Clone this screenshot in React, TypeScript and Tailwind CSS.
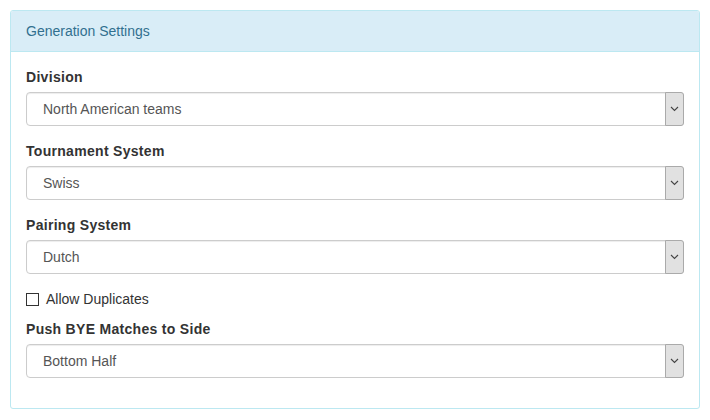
import React from "react";

const Select = ({ value }: { value: string }) => {
  return (
    <div className="flex h-[34px] w-full items-stretch rounded-[4px] border border-[#ccc] bg-white shadow-[inset_0_1px_1px_rgba(0,0,0,0.075)]">
      <div className="flex flex-1 items-center pl-[16px] text-[14px] text-[#555]">{value}</div>
      <div className="my-[-1px] mr-[-1px] flex w-[19px] items-center justify-center rounded-r-[3px] border border-[#aaa] bg-[#e1e1e1]">
        <svg width="9" height="6" viewBox="0 0 9 6" fill="none">
          <path d="M1 1l3.5 3.5L8 1" stroke="#444" strokeWidth="1.1" />
        </svg>
      </div>
    </div>
  );
};

const Group = ({ label, value }: { label: string; value: string }) => {
  return (
    <div className="mb-[15px]">
      <label className="mb-[5px] block text-[14px] font-bold leading-[20px] tracking-[0.3px] text-[#333]">{label}</label>
      <Select value={value} />
    </div>
  );
};

export default function App() {
  return (
    <div className="min-h-[420px] bg-white p-[10px] font-['Liberation_Sans',Arial,sans-serif] text-[14px] leading-[20px] text-[#333]">
      <div className="w-[690px] rounded-[3px] border border-[#bce8f1] bg-white">
        <div className="rounded-t-[2px] border-b border-[#bce8f1] bg-[#d9edf7] px-[15px] py-[10px] text-[14px] text-[#31708f]">
          Generation Settings
        </div>
        <div className="p-[15px]">
          <Group label="Division" value="North American teams" />
          <Group label="Tournament System" value="Swiss" />
          <div className="mb-[10px]">
            <Group label="Pairing System" value="Dutch" />
          </div>
          <div className="mb-[10px] flex items-center">
            <span className="mr-[7px] inline-block h-[13px] w-[13px] border border-[#333] bg-white" />
            <span className="leading-[20px]">Allow Duplicates</span>
          </div>
          <Group label="Push BYE Matches to Side" value="Bottom Half" />
        </div>
      </div>
    </div>
  );
}
